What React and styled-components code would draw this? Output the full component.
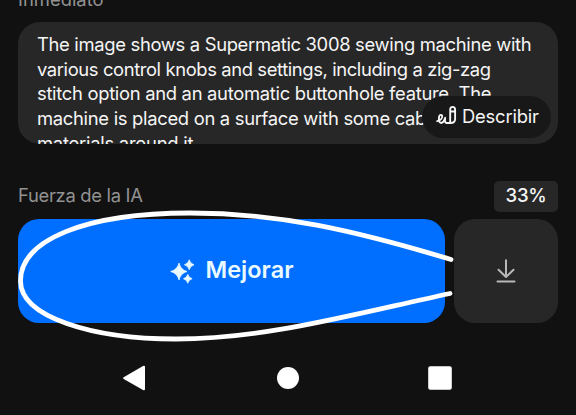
import React from "react";
import styled, { createGlobalStyle } from "styled-components";

const Global = createGlobalStyle`
  * { box-sizing: border-box; }
  body { margin: 0; background: #111; }
  button { border: 0; padding: 0; font: inherit; color: inherit; }
`;

const Screen = styled.main`
  position: relative;
  width: 576px;
  height: 415px;
  overflow: hidden;
  padding: 0 18px;
  background: #111;
  color: #f5f5f5;
  font-family: Inter, "Liberation Sans", sans-serif;
  font-size: 18.4px;
`;

const PromptHeading = styled.div`
  height: 22px;
  overflow: hidden;
`;

const Label = styled.span`
  display: block;
  color: #929292;
  line-height: 24px;
  white-space: nowrap;
  letter-spacing: ${(p) => p.$track || 0}px;
  margin-top: ${(p) => p.$shift || 0}px;
`;

const PromptBox = styled.section`
  position: relative;
  height: 122px;
  padding: 10.3px 19px 0;
  overflow: hidden;
  border-radius: 22px;
  background: #272727;
`;

const PromptLine = styled.div`
  height: 24.6px;
  line-height: 24.6px;
  white-space: nowrap;
  letter-spacing: ${(p) => p.$track}px;
`;

const DescribeButton = styled.button`
  position: absolute;
  right: 7px;
  bottom: 6px;
  width: 129px;
  height: 42px;
  display: flex;
  align-items: center;
  gap: 5px;
  padding: 0 0 2px 14px;
  border-radius: 21px;
  background: #181818;
  letter-spacing: -0.2px;
`;

const StrengthRow = styled.div`
  height: 31px;
  margin-top: 37px;
  display: flex;
  align-items: center;
  justify-content: space-between;
`;

const Percentage = styled.output`
  width: 64px;
  height: 31px;
  border-radius: 5px;
  background: #272727;
  text-align: center;
  font-size: 18.6px;
  font-weight: 500;
  line-height: 29px;
  letter-spacing: -0.3px;
`;

const Actions = styled.div`
  display: grid;
  grid-template-columns: 427px 104px;
  gap: 9px;
  height: 104px;
  margin-top: 7px;
`;

const ActionButton = styled.button`
  display: flex;
  align-items: center;
  justify-content: center;
  gap: 11px;
  border-radius: 21px;
  background: ${(p) => (p.$primary ? "#006fff" : "#272727")};
  color: ${(p) => (p.$primary ? "#e9faff" : "#b8b8b8")};
  font-size: 23.5px;
  font-weight: 600;
`;

const ActionText = styled.span`
  line-height: 28px;
  margin-top: -3px;
`;

const NavBar = styled.nav`
  display: flex;
  justify-content: space-between;
  align-items: center;
  width: 330px;
  height: 26px;
  margin: 42px 0 0 105px;
`;

const NavIcon = styled.svg`
  width: 26px;
  height: 26px;
  fill: #fff;
`;

const Annotation = styled.svg`
  position: absolute;
  inset: 0;
  pointer-events: none;
`;

const lines = [
  ["The image shows a Supermatic 3008 sewing machine with", -0.32],
  ["various control knobs and settings, including a zig-zag", -0.39],
  ["stitch option and an automatic buttonhole feature. The", -0.3],
  ["machine is placed on a surface with some cables", -0.3],
  ["materials around it.", -0.25],
];

const PenIcon = () => (
  <svg width="21" height="22" viewBox="0 0 21 22" fill="none" stroke="#f5f5f5" strokeWidth="1.9" strokeLinecap="round" strokeLinejoin="round">
    <path d="M1.2 16.2C4.3 15.3 6.5 13 6.2 11C5.9 9.3 3.5 9.5 3.1 11.7C2.5 14.8 3 18 5.2 18C7.7 18 8.4 14.8 9.2 12.8C8.7 15.8 8.7 18 10.8 18H14.5C17.7 18 19.1 16.8 19.1 14V4.5C19.1 1 14.2 1 14.2 4.5V17.8M14.2 6.5H19.1" />
  </svg>
);

const SparkIcon = () => (
  <svg width="25" height="25" viewBox="0 0 26 26" fill="currentColor" stroke="currentColor" strokeWidth=".8" strokeLinejoin="round">
    <path d="M9.4 4.2Q10.9 11.2 17.7 13Q10.9 14.8 9.4 21.8Q7.7 14.8.7 13Q7.7 11.2 9.4 4.2Z" />
    <path d="M20 .8Q21 4.8 25 6Q21 7.2 20 11.2Q19 7.2 15 6Q19 4.8 20 .8Z" />
    <path d="M18.5 16Q19.5 19.5 23 20.5Q19.5 21.5 18.5 25.2Q17.5 21.5 14 20.5Q17.5 19.5 18.5 16Z" />
  </svg>
);

const DownloadIcon = () => (
  <svg width="24" height="26" viewBox="0 0 24 26" fill="none" stroke="currentColor" strokeWidth="2" strokeLinecap="round" strokeLinejoin="round">
    <path d="M12 2.3V19M4.5 11.7L12 19L19.5 11.7M3.5 23.5H20.5" />
  </svg>
);

export default function App() {
  return (
    <Screen>
      <Global />
      <PromptHeading><Label $shift={-13}>Inmediato</Label></PromptHeading>
      <PromptBox>
        {lines.map(([text, track]) => <PromptLine key={text} $track={track}>{text}</PromptLine>)}
        <DescribeButton><PenIcon />Describir</DescribeButton>
      </PromptBox>
      <StrengthRow>
        <Label $track={-0.3} $shift={-4}>Fuerza de la IA</Label>
        <Percentage>33%</Percentage>
      </StrengthRow>
      <Actions>
        <ActionButton $primary><SparkIcon /><ActionText>Mejorar</ActionText></ActionButton>
        <ActionButton aria-label="Descargar"><DownloadIcon /></ActionButton>
      </Actions>
      <NavBar>
        <NavIcon viewBox="0 0 26 26"><path d="M.7 12.2 20 1Q22 0 22 2V24Q22 26 20 25L.7 14Q-.5 13 .7 12.2Z" /></NavIcon>
        <NavIcon viewBox="0 0 26 26"><circle cx="13" cy="13" r="11" /></NavIcon>
        <NavIcon viewBox="0 0 26 26"><rect x="1.2" y="1.2" width="23.6" height="23.6" rx="2" /></NavIcon>
      </NavBar>
      <Annotation width="576" height="415" viewBox="0 0 576 415" fill="none" stroke="#fff" strokeWidth="4.8" strokeLinecap="round">
        <path d="M451 259.5C353 230 278 213 190 213C85 213 20.5 240 20.5 281C20.5 317 92 339 176 339C265 339 350 315 450 293.5" />
      </Annotation>
    </Screen>
  );
}
